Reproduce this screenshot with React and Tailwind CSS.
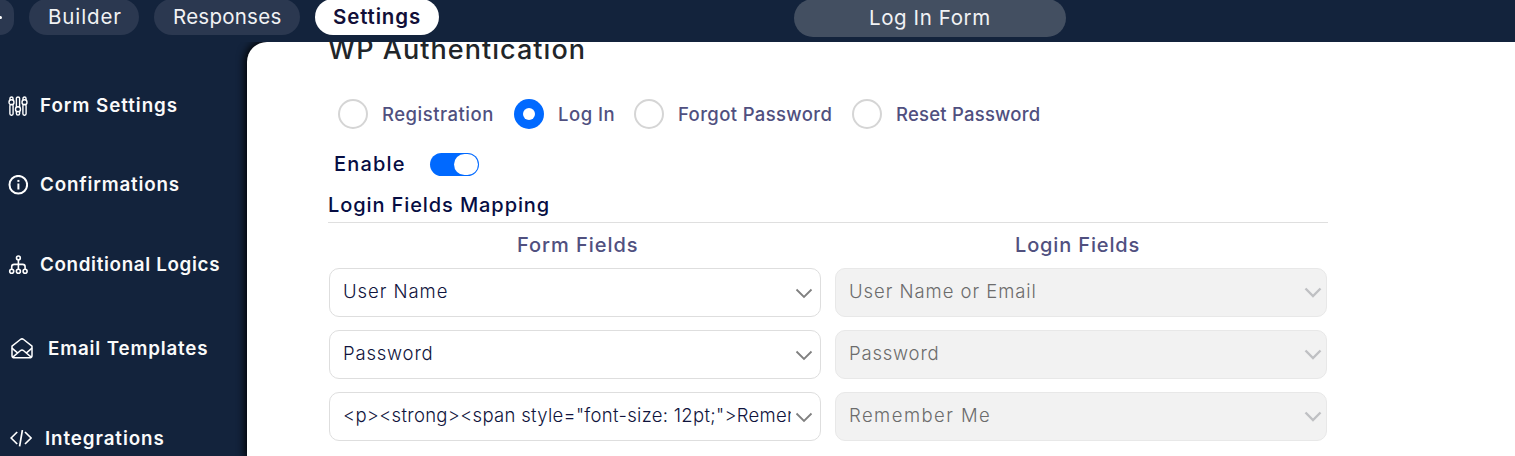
const icons = {
  sliders: (
    <svg width="20" height="20" viewBox="0 0 20 20" fill="none" stroke="#fff" strokeWidth="1.4">
      <rect x="1.9" y="8.4" width="3.2" height="10.8" rx="1.4" />
      <path d="M2 4.1V2.2C2 .6 5 .6 5 2.2v1.9" />
      <circle cx="3.5" cy="6.2" r="2.5" />
      <path d="M8.4 11.2V2.2c0-1.6 3.2-1.6 3.2 0v9M8.4 15.4v2.2c0 2 3.2 2 3.2 0v-2.2" />
      <circle cx="10" cy="13.2" r="2.5" />
      <rect x="14.9" y="8.4" width="3.2" height="10.8" rx="1.4" />
      <path d="M15 4.1V2.2c0-1.6 3-1.6 3 0v1.9" />
      <circle cx="16.5" cy="6.2" r="2.5" />
    </svg>
  ),
  info: (
    <svg width="20" height="20" viewBox="0 0 20 20" fill="none" stroke="#fff">
      <circle cx="10.3" cy="9.7" r="8.8" strokeWidth="2" />
      <path d="M10.4 8.5v6" strokeWidth="2" />
      <path d="M10.4 4.9v2" strokeWidth="2" />
    </svg>
  ),
  tree: (
    <svg width="20" height="20" viewBox="0 0 20 20" fill="none" stroke="#fff" strokeWidth="1.6">
      <circle cx="10.4" cy="2.9" r="1.9" />
      <path d="M10.4 5v9M3.7 14v-2.2c0-1.6 1-2.4 2.4-2.4h8.6c1.4 0 2.4.8 2.4 2.4V14" />
      <circle cx="3.7" cy="16.2" r="2" />
      <circle cx="10.4" cy="16.2" r="2" />
      <circle cx="17.1" cy="16.2" r="2" />
    </svg>
  ),
  mail: (
    <svg width="22" height="22" viewBox="0 0 22 22" fill="none" stroke="#fff" strokeWidth="1.5" strokeLinejoin="round">
      <path d="M1 8.2 9.4 1.5a2.6 2.6 0 0 1 3.2 0L21 8.2v9.2a2.4 2.4 0 0 1-2.4 2.4H3.4A2.4 2.4 0 0 1 1 17.4Z" />
      <path d="m1 10.1 5.8 5M21 10.1l-5.8 5M1.8 19.1 9.3 12.7a2.6 2.6 0 0 1 3.4 0l7.5 6.4" />
    </svg>
  ),
  code: (
    <svg width="22" height="18" viewBox="0 0 22 18" fill="none" stroke="#fff" strokeWidth="1.7">
      <path d="M7.2 2 1.1 8l6.1 6M15 2l6.1 6-6.1 6M12.4 0 9.6 16.4" />
    </svg>
  ),
};

const menu = [
  { label: "Form Settings", icon: "sliders", row: "mt-[44px] h-10 pl-[8px] gap-[12px]", text: "tracking-[0.96px]" },
  { label: "Confirmations", icon: "info", row: "mt-[39px] h-10 pl-[8px] gap-[12px]", text: "tracking-[0.82px]" },
  { label: "Conditional Logics", icon: "tree", row: "mt-[40px] h-10 pl-[8px] gap-[12px]", text: "tracking-[0.66px]" },
  { label: "Email Templates", icon: "mail", row: "mt-[44px] h-10 pl-[11px] gap-[15px]", text: "tracking-[0.84px]" },
  { label: "Integrations", icon: "code", row: "mt-[50px] h-10 pl-[10px] gap-[13px]", text: "tracking-[0.9px]" },
];

const radios = [
  { label: "Registration", on: false, box: "w-[176px]", text: "tracking-[0.5px]" },
  { label: "Log In", on: true, box: "w-[120px]", text: "tracking-[0.5px]" },
  { label: "Forgot Password", on: false, box: "w-[218px]", text: "tracking-[0.37px]" },
  { label: "Reset Password", on: false, box: "w-[200px]", text: "tracking-[0.22px]" },
];

const fields = [
  { form: "User Name", formText: "tracking-[0.95px]", login: "User Name or Email", loginText: "tracking-[0.95px]" },
  { form: "Password", formText: "tracking-[0.8px]", login: "Password", loginText: "tracking-[0.8px]" },
  {
    form: '<p><strong><span style="font-size: 12pt;">Remem',
    formText: "tracking-[0.3px]",
    login: "Remember Me",
    loginText: "tracking-[1.45px]",
  },
];

function Chevron({ className }) {
  return (
    <svg className={className} width="18" height="12" viewBox="0 0 18 12" fill="none" stroke="currentColor">
      <path d="M1.5 1.5 9 9l7.5-7.5" />
    </svg>
  );
}

function Header() {
  return (
    <header className="relative z-10 flex h-[42px] shrink-0 items-start overflow-hidden bg-[#13233c] text-[20.5px] text-[#f1f2f4]">
      <div className="-mt-px flex h-9 w-[14px] items-center rounded-r-full bg-[#2b3850]">
        <span className="h-[3px] w-[2px] rounded-r-full bg-white" />
      </div>
      <div className="-mt-px ml-[15px] flex h-9 w-[110px] items-center rounded-full bg-[#2b3850] pl-[19px] tracking-[0.9px]">Builder</div>
      <div className="-mt-px ml-[15px] flex h-9 w-[146px] items-center rounded-full bg-[#2b3850] pl-[19px] tracking-[0.25px]">Responses</div>
      <div className="-mt-px ml-[15px] flex h-9 w-[124px] items-center rounded-full bg-white pl-[18px] font-semibold tracking-[0.84px] text-[#120f38]">
        Settings
      </div>
      <div className="-mt-px ml-[355px] flex h-[38px] w-[272px] items-center rounded-full bg-[#434f61] pl-[75px] tracking-[0.6px]">Log In Form</div>
    </header>
  );
}

function Sidebar() {
  return (
    <nav className="flex w-[247px] shrink-0 flex-col">
      {menu.map((m) => (
        <div key={m.label} className={"flex shrink-0 items-center text-[18.8px] font-semibold text-[#fafafa] " + m.row}>
          {icons[m.icon]}
          <span className={"whitespace-nowrap " + m.text}>{m.label}</span>
        </div>
      ))}
    </nav>
  );
}

export default function App() {
  return (
    <div className="flex h-[456px] w-[1515px] flex-col overflow-hidden bg-[#13233c] font-['Inter',sans-serif]">
      <Header />
      <div className="flex min-h-0 flex-1">
        <Sidebar />
        <main className="min-w-0 flex-1 rounded-tl-[20px] bg-white pl-[81px] shadow-[0_0_8px_2px_#000]">
          <h1 className="-mt-[12px] h-10 text-[27px] leading-10 font-medium tracking-[1.05px] text-[#212529]">WP Authentication</h1>
          <div className="mt-[29px] flex h-[30px] pl-[10px]">
            {radios.map((r) => (
              <label key={r.label} className={"flex h-[30px] items-center " + r.box}>
                {r.on ? (
                  <span className="flex size-[30px] items-center justify-center rounded-full bg-[#0069ff]">
                    <span className="size-3 rounded-full bg-white" />
                  </span>
                ) : (
                  <span className="size-[30px] rounded-full border-2 border-[#d5d5d5]" />
                )}
                <span className={"ml-[14px] whitespace-nowrap text-[18.5px] leading-[30px] font-medium text-[#50507f] " + r.text}>{r.label}</span>
              </label>
            ))}
          </div>
          <div className="mt-[20px] flex h-[30px] items-center pl-[6px]">
            <span className="w-[96px] text-[20px] leading-[30px] font-medium tracking-[1.2px] text-[#060d43]">Enable</span>
            <span className="flex h-[23px] w-[49px] items-center justify-end rounded-full bg-[#0069ff] px-px">
              <span className="h-[21px] w-[24px] rounded-full bg-white" />
            </span>
          </div>
          <h2 className="mt-[11px] h-[30px] text-[20px] leading-[30px] font-medium tracking-[0.9px] text-[#060d43]">Login Fields Mapping</h2>
          <div className="mt-[2px] h-px w-[1000px] bg-[#dfdfdf]" />
          <div className="mt-[7px] flex h-[30px] text-[20px] leading-[30px] font-medium text-[#50507f]">
            <span className="w-[498px] pl-[189px] tracking-[0.95px]">Form Fields</span>
            <span className="pl-[189px] tracking-[0.85px]">Login Fields</span>
          </div>
          <div className="mt-2 flex flex-col gap-[13px] pl-px">
            {fields.map((f) => (
              <div key={f.login} className="flex gap-[14px] text-[18.5px] leading-[30px] font-light">
                <div className="flex h-[49px] w-[492px] items-center justify-between rounded-[10px] border border-[#dedede] bg-white pr-[7px] pb-[4px] pl-[13px]">
                  <span className={"w-[448px] shrink-0 overflow-hidden whitespace-nowrap text-[#10143d] " + f.formText}>{f.form}</span>
                  <Chevron className="mt-[6px] stroke-[1.8] text-[#808080]" />
                </div>
                <div className="flex h-[49px] w-[492px] items-center justify-between rounded-[10px] border border-[#e8e8e8] bg-[#f2f2f2] pr-[4px] pb-[4px] pl-[13px]">
                  <span className={"whitespace-nowrap text-[#6c6c6c] " + f.loginText}>{f.login}</span>
                  <Chevron className="mt-[5px] stroke-[2.4] text-[#bfc0c3]" />
                </div>
              </div>
            ))}
          </div>
        </main>
      </div>
    </div>
  );
}
